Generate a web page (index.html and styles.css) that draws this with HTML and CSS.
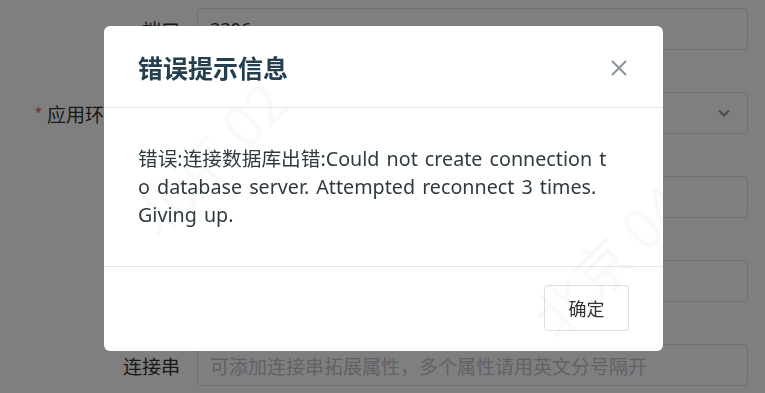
FILE: index.html
```html
<!DOCTYPE html>
<html lang="zh-CN">
<head>
<meta charset="utf-8">
<title>错误提示信息</title>
<link rel="stylesheet" href="styles.css">
</head>
<body>
<div class="form">
  <div class="row">
    <label class="label">端口</label>
    <div class="input">3306</div>
  </div>
  <div class="row">
    <label class="label"><span class="req">*</span>应用环境标识码</label>
    <div class="input select">
      <span class="value"></span>
      <svg class="chev" width="14" height="10" viewBox="0 0 14 10"><path d="M2 2.5 L7 7.5 L12 2.5" fill="none" stroke="#999" stroke-width="2.2"/></svg>
    </div>
  </div>
  <div class="row">
    <label class="label">数据库名</label>
    <div class="input"></div>
  </div>
  <div class="row">
    <label class="label">用户名</label>
    <div class="input"></div>
  </div>
  <div class="row">
    <label class="label">连接串</label>
    <div class="input placeholder">可添加连接串拓展属性，多个属性请用英文分号隔开</div>
  </div>
</div>

<div class="mask">
  <div class="dialog">
    <div class="wm wm1">北京 02</div>
    <div class="wm wm2">北京 0401</div>
    <div class="dialog-header">
      <h2 class="dialog-title">错误提示信息</h2>
      <svg class="close" width="18" height="18" viewBox="0 0 18 18"><path d="M2 2 L16 16 M16 2 L2 16" stroke="#8d949a" stroke-width="2" fill="none"/></svg>
    </div>
    <div class="dialog-body">
      <p class="msg">错误:连接数据库出错:Could not create connection to database server. Attempted reconnect 3 times. Giving up.</p>
    </div>
    <div class="dialog-footer">
      <button class="btn">确定</button>
    </div>
  </div>
</div>
</body>
</html>
```
FILE: styles.css
```css
html, body {
  margin: 0;
  padding: 0;
  background: #ffffff;
  font-family: "Noto Sans", "Noto Sans CJK SC", sans-serif;
  color: #333;
  overflow: hidden;
  height: 393px;
}

.form {
  display: flex;
  flex-direction: column;
  gap: 42px;
  padding-top: 8px;
}

.row {
  display: flex;
  align-items: center;
  height: 42px;
}

.label {
  width: 180px;
  flex: none;
  text-align: right;
  font-size: 19px;
  color: #333;
  white-space: nowrap;
  font-family: "Noto Sans CJK SC", sans-serif;
}

.req {
  color: #f56c6c;
  margin-right: 4px;
}

.input {
  margin-left: 17px;
  width: 551px;
  height: 42px;
  box-sizing: border-box;
  border: 1px solid #dcdfe6;
  border-radius: 4px;
  padding: 0 12px;
  display: flex;
  align-items: center;
  font-size: 18px;
  color: #333;
}

.select {
  justify-content: space-between;
}

.chev {
  margin-right: 4px;
}

.placeholder {
  color: #c0c4cc;
  font-size: 19px;
  font-family: "Noto Sans CJK SC", sans-serif;
}

.mask {
  position: fixed;
  inset: 0;
  background: rgba(0, 0, 0, 0.5);
  display: flex;
  justify-content: flex-start;
  align-items: flex-start;
  padding: 26px 0 0 104px;
}

.dialog {
  position: relative;
  width: 559px;
  height: 325px;
  background: #fff;
  border-radius: 6px;
  display: flex;
  flex-direction: column;
  overflow: hidden;
}

.dialog-header {
  height: 82px;
  flex: none;
  box-sizing: border-box;
  border-bottom: 1px solid #e8e8e8;
  display: flex;
  align-items: center;
  justify-content: space-between;
  padding: 0 35px 0 34px;
}

.dialog-title {
  margin: 0;
  font-size: 25px;
  font-weight: 700;
  color: #24404f;
  font-family: "Noto Sans CJK SC", sans-serif;
}

.close {
  margin-top: 2px;
}

.dialog-body {
  height: 159px;
  flex: none;
  box-sizing: border-box;
  border-bottom: 1px solid #e8e8e8;
  padding: 37px 56px 0 34px;
}

.msg {
  margin: 0;
  font-size: 19.7px;
  line-height: 28px;
  word-spacing: 2px;
  color: #2f3b40;
  word-break: break-all;
}

.dialog-footer {
  flex: 1;
  display: flex;
  justify-content: flex-end;
  align-items: center;
  padding-right: 34px;
  padding-bottom: 2px;
}

.btn {
  width: 85px;
  height: 46px;
  background: #fff;
  border: 1px solid #dcdfe6;
  border-radius: 4px;
  font-size: 18px;
  color: #333;
  font-family: "Noto Sans CJK SC", sans-serif;
  padding: 0;
}

.wm {
  position: absolute;
  font-size: 56px;
  font-family: "Noto Sans CJK SC", sans-serif;
  color: rgba(0, 0, 0, 0.025);
  transform: rotate(-45deg);
  white-space: nowrap;
  pointer-events: none;
}

.wm1 {
  left: 10px;
  top: 90px;
}

.wm2 {
  left: 400px;
  top: 170px;
}
```
